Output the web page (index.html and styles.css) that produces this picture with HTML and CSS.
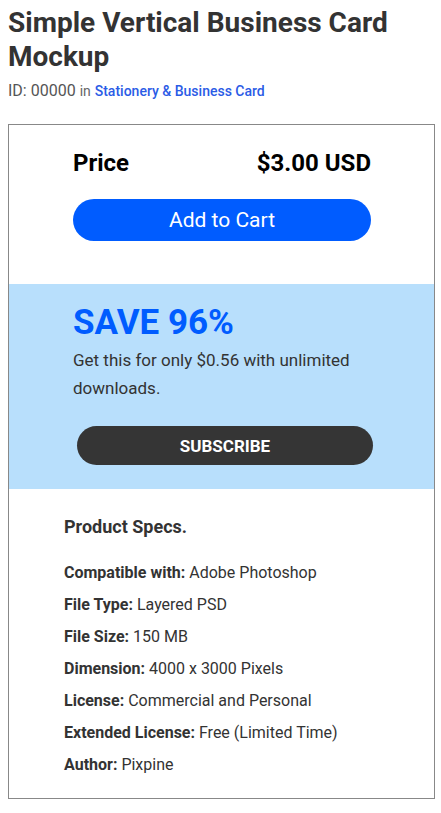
FILE: index.html
```html
<!DOCTYPE html>
<html>
<head>
<meta charset="utf-8">
<link rel="stylesheet" href="styles.css">
</head>
<body>
<h1 class="title">Simple Vertical Business Card Mockup</h1>
<div class="meta">ID: 00000 <span class="in">in</span> <a class="cat" href="#">Stationery &amp; Business Card</a></div>
<div class="box">
  <div class="buy">
    <div class="price-row"><span>Price</span><span>$3.00 USD</span></div>
    <button class="cart">Add to Cart</button>
  </div>
  <div class="save">
    <div class="save-title">SAVE 96%</div>
    <p class="save-text">Get this for only $0.56 with unlimited downloads.</p>
    <button class="sub">SUBSCRIBE</button>
  </div>
  <div class="specs">
    <h2 class="specs-title">Product Specs.</h2>
    <ul class="spec-list">
      <li><b>Compatible with:</b> Adobe Photoshop</li>
      <li><b>File Type:</b> Layered PSD</li>
      <li><b>File Size:</b> 150 MB</li>
      <li><b>Dimension:</b> 4000 x 3000 Pixels</li>
      <li><b>License:</b> Commercial and Personal</li>
      <li><b>Extended License:</b> Free (Limited Time)</li>
      <li><b>Author:</b> Pixpine</li>
    </ul>
  </div>
</div>
</body>
</html>
```
FILE: styles.css
```css
* { box-sizing: border-box; }
body {
  margin: 0;
  padding: 6px 8px 0 8px;
  font-family: Roboto, "Liberation Sans", sans-serif;
  color: #333;
  background: #fff;
  width: 441px;
}
.title {
  margin: 0;
  font-size: 28px;
  line-height: 34px;
  font-weight: 700;
  color: #333;
}
.meta {
  margin-top: 8px;
  font-size: 16px;
  line-height: 18px;
  font-weight: 400;
  color: #555;
}
.meta .in { font-weight: 400; color: #666; font-size: 14px; }
.meta .cat { color: #2b5ce6; text-decoration: none; font-weight: 500; font-size: 14px; }
.box {
  margin-top: 24px;
  width: 427px;
  border: 1px solid #888;
}
.buy {
  padding: 23px 63px 43px 64px;
}
.price-row {
  display: flex;
  justify-content: space-between;
  font-size: 24px;
  line-height: 30px;
  font-weight: 700;
  color: #000;
}
.cart {
  display: block;
  width: 100%;
  margin-top: 21px;
  height: 42px;
  border: 0;
  border-radius: 21px;
  background: #005cff;
  color: #fff;
  font-family: inherit;
  font-size: 21px;
  font-weight: 400;
}
.save {
  background: #b8dffc;
  padding: 18px 50px 24px 64px;
}
.save-title {
  font-size: 35px;
  line-height: 42px;
  font-weight: 700;
  color: #005cff;
}
.save-text {
  margin: 2px 0 0 0;
  font-size: 17px;
  line-height: 28px;
  color: #333;
}
.sub {
  display: block;
  margin: 24px 0 0 4px;
  width: 296px;
  height: 39px;
  border: 0;
  border-radius: 20px;
  background: #353535;
  color: #fff;
  font-family: inherit;
  font-size: 17px;
  font-weight: 700;
}
.specs {
  padding: 27px 30px 17px 55px;
}
.specs-title {
  margin: 0;
  font-size: 18px;
  line-height: 22px;
  font-weight: 700;
  color: #333;
}
.spec-list {
  list-style: none;
  margin: 19px 0 0 0;
  padding: 0;
}
.spec-list li {
  font-size: 16px;
  line-height: 32px;
  color: #333;
}
.spec-list b { font-weight: 700; }
```
